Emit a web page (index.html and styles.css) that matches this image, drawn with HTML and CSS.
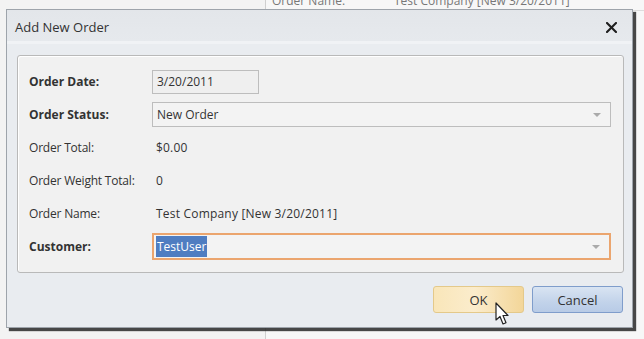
FILE: index.html
```html
<!DOCTYPE html>
<html lang="en">
<head>
  <meta charset="utf-8">
  <title>Add New Order</title>
  <link rel="stylesheet" href="styles.css">
</head>
<body>
  <div class="page">
    <div class="page-grid">
      <div class="grid-row">
        <span class="grid-label">Order Name:</span>
        <span class="grid-value">Test Company [New 3/20/2011]</span>
      </div>
    </div>
  </div>

  <div class="dialog">
    <div class="dialog-head">
      <span class="dialog-title">Add New Order</span>
      <svg class="dialog-close" width="11" height="11" viewBox="0 0 11 11">
        <path d="M1 1 L10 10 M10 1 L1 10" stroke="#1e1e1e" stroke-width="2.1" stroke-linecap="square"/>
      </svg>
    </div>

    <div class="panel">
      <div class="row">
        <label class="label strong">Order Date:</label>
        <div class="field field-date">3/20/2011</div>
      </div>
      <div class="row">
        <label class="label strong">Order Status:</label>
        <div class="field field-select">New Order<span class="caret"></span></div>
      </div>
      <div class="row">
        <label class="label">Order Total:</label>
        <div class="value">$0.00</div>
      </div>
      <div class="row">
        <label class="label">Order Weight Total:</label>
        <div class="value">0</div>
      </div>
      <div class="row">
        <label class="label">Order Name:</label>
        <div class="value">Test Company [New 3/20/2011]</div>
      </div>
      <div class="row">
        <label class="label strong">Customer:</label>
        <div class="field field-select field-focus"><span class="selected">TestUser</span><span class="caret"></span></div>
      </div>
    </div>

    <div class="buttons">
      <button class="btn btn-ok">OK</button>
      <button class="btn btn-cancel">Cancel</button>
    </div>
  </div>

  <svg class="pointer" width="14" height="24" viewBox="0 0 14 24">
    <path d="M1 1 L1 18 L5 14.5 L8 22 L11 20.8 L8 13.5 L13 13.5 Z" fill="#fff" stroke="#222" stroke-width="1.2" stroke-linejoin="round"/>
  </svg>
</body>
</html>
```

FILE: styles.css
```css
* { box-sizing: border-box; }
body {
  margin: 0;
  width: 644px;
  height: 339px;
  overflow: hidden;
  background: #f3f3f3;
  font-family: "Open Sans", "Noto Sans", sans-serif;
  font-size: 12px;
  color: #333;
}
.page {
  display: flex;
  justify-content: flex-end;
  height: 100%;
}
.page-grid {
  width: 379px;
  height: 100%;
  border-left: 1px solid #cfcfcf;
  background: #f7f7f7;
}
.grid-row {
  display: flex;
  margin-top: -9px;
  height: 20px;
  align-items: center;
  border-bottom: 1px solid #ddd;
  color: #777;
  font-size: 12px;
}
.grid-label { width: 128px; padding-left: 6px; }

.dialog {
  position: absolute;
  left: 6px;
  top: 9px;
  width: 627px;
  height: 319px;
  display: flex;
  flex-direction: column;
  background: #e9ecf0;
  border: 1px solid #9ea4ab;
  box-shadow: 3px 3px 1px rgba(40, 40, 40, .85);
}
.dialog-head {
  height: 34px;
  display: flex;
  align-items: center;
  justify-content: space-between;
  padding: 3px 15px 0 8px;
  background: linear-gradient(#e3e6ea, #e6e9ed);
  border-bottom: 3px solid #f0f2f5;
}
.dialog-title { font-size: 13px; color: #333; }

.panel {
  margin: 11px 8px 0 10px;
  height: 218px;
  padding: 9px 0 0 11px;
  background: #f1f1f1;
  border: 1px solid #b9b9b9;
  border-radius: 3px;
  box-shadow: inset 1px 1px 0 #fff;
}
.row {
  display: flex;
  align-items: center;
  height: 33px;
}
.label { width: 123px; letter-spacing: -0.2px; }
.strong { font-weight: 700; letter-spacing: 0; }
.value { padding-left: 4px; letter-spacing: 0.2px; }
.field {
  position: relative;
  display: flex;
  align-items: center;
  padding-left: 4px;
  height: 25px;
  background: #f3f3f3;
  border: 1px solid #bdbdbd;
}
.field-date { width: 107px; height: 24px; background: #efefef; }
.field-select { width: 459px; }
.field-focus {
  height: 27px;
  border: 2px solid #eba56e;
  padding-left: 2px;
}
.selected {
  background: #4f7dc1;
  color: #fff;
  padding: 3px 1px;
  line-height: 15px;
}
.caret {
  position: absolute;
  right: 9px;
  top: 10px;
  border-left: 4px solid transparent;
  border-right: 4px solid transparent;
  border-top: 4px solid #aaa;
}

.buttons {
  display: flex;
  justify-content: flex-end;
  gap: 8px;
  padding: 13px 9px 0 0;
}
.btn {
  width: 91px;
  height: 27px;
  font-family: inherit;
  font-size: 13px;
  color: #333;
  border-radius: 3px;
}
.btn-ok {
  background: linear-gradient(90deg, #f9e6b9, #fbeccc 45%, #f3d699);
  border: 1px solid #e4c98a;
}
.btn-cancel {
  background: linear-gradient(#d9e4f2, #c2d3ea 60%, #b8cbe6);
  border: 1px solid #7f9dcb;
}
.pointer {
  position: absolute;
  left: 495px;
  top: 302px;
}
```
